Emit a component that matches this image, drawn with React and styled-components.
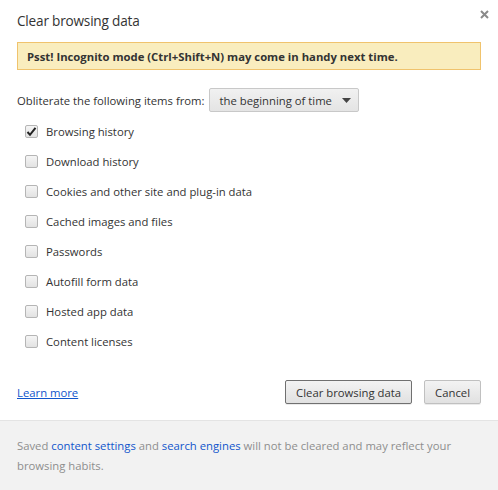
import React from 'react';
import styled, { createGlobalStyle } from 'styled-components';

const GlobalStyle = createGlobalStyle`
  html, body {
    margin: 0;
    padding: 0;
    background: #fff;
  }
  body {
    font-family: "Open Sans", "Liberation Sans", sans-serif;
    font-size: 11.3px;
    color: #333;
  }
`;

const Dialog = styled.div`
  position: relative;
  width: 498px;
  height: 490px;
  display: flex;
  flex-direction: column;
  background: #fff;
`;

const Body = styled.div`
  flex: 1;
  padding: 10px 17px 0 17px;
`;

const Title = styled.h1`
  margin: 0;
  font-size: 13.6px;
  letter-spacing: -0.2px;
  font-weight: normal;
  line-height: 22px;
  color: #333;
`;

const CloseButton = styled.button`
  position: absolute;
  top: 6px;
  right: 6px;
  width: 16px;
  height: 16px;
  padding: 0;
  border: none;
  background: none;
  display: flex;
  align-items: center;
  justify-content: center;
`;

const Banner = styled.div`
  margin-top: 10px;
  height: 28px;
  box-sizing: border-box;
  background: #f9edbe;
  border: 1px solid #f0c36d;
  padding: 0 9px;
  display: flex;
  align-items: center;
  font-weight: bold;
  color: #333;
`;

const FromRow = styled.div`
  margin-top: 18px;
  display: flex;
  align-items: center;
  gap: 4px;
`;

const Select = styled.div`
  width: 150px;
  height: 24px;
  box-sizing: border-box;
  border: 1px solid #c8c8c8;
  border-radius: 2px;
  background: linear-gradient(#f1f1f1, #e4e4e4);
  display: flex;
  align-items: center;
  justify-content: space-between;
  padding: 0 7px 0 10px;
  color: #333;
`;

const List = styled.div`
  margin-top: 4px;
  padding-left: 8px;
  display: flex;
  flex-direction: column;
`;

const Row = styled.label`
  height: 30px;
  display: flex;
  align-items: center;
  gap: 8px;
`;

const Box = styled.span`
  width: 13px;
  height: 13px;
  box-sizing: border-box;
  border: 1px solid #b5b5b5;
  border-radius: 2px;
  background: linear-gradient(#f5f5f5, #e2e2e2);
  display: flex;
  align-items: center;
  justify-content: center;
`;

const Actions = styled.div`
  margin-top: 24px;
  display: flex;
  align-items: center;
`;

const Link = styled.a`
  color: #15c;
  text-decoration: underline;
  cursor: pointer;
`;

const Spacer = styled.div`
  flex: 1;
`;

const Button = styled.button`
  height: 24px;
  margin-left: 12px;
  padding: 0 ${p => (p.$focused ? '10px' : '10px')};
  font-family: inherit;
  font-size: 11.3px;
  color: #333;
  border-radius: 2px;
  border: 1px solid ${p => (p.$focused ? '#707070' : '#c0c0c0')};
  background: linear-gradient(#f3f3f3, #e1e1e1);
  box-shadow: 0 1px 0 rgba(0, 0, 0, 0.08);
`;

const Footer = styled.div`
  height: 70px;
  box-sizing: border-box;
  border-top: 1px solid #e4e4e4;
  background: #f2f2f2;
  padding: 15px 17px 0 17px;
  line-height: 20px;
  color: #8e8e8e;
`;

const FootLink = styled.a`
  color: #15c;
  text-decoration: none;
`;

const items = [
  { label: 'Browsing history', checked: true },
  { label: 'Download history' },
  { label: 'Cookies and other site and plug-in data' },
  { label: 'Cached images and files' },
  { label: 'Passwords' },
  { label: 'Autofill form data' },
  { label: 'Hosted app data' },
  { label: 'Content licenses' },
];

function Check({ checked }) {
  return (
    <Box>
      {checked && (
        <svg width="11" height="11" viewBox="0 0 11 11">
          <path d="M1.5 6 L4 8.8 L9.5 1.8" fill="none" stroke="#222" strokeWidth="2" />
        </svg>
      )}
    </Box>
  );
}

export default function App() {
  return (
    <>
      <GlobalStyle />
      <Dialog>
        <CloseButton aria-label="Close">
          <svg width="9" height="9" viewBox="0 0 9 9">
            <path d="M1 1 L8 8 M8 1 L1 8" stroke="#8a8a8a" strokeWidth="2" />
          </svg>
        </CloseButton>
        <Body>
          <Title>Clear browsing data</Title>
          <Banner>Psst! Incognito mode (Ctrl+Shift+N) may come in handy next time.</Banner>
          <FromRow>
            <span>Obliterate the following items from:</span>
            <Select>
              <span>the beginning of time</span>
              <svg width="9" height="5" viewBox="0 0 9 5">
                <path d="M0 0 H9 L4.5 5 Z" fill="#444" />
              </svg>
            </Select>
          </FromRow>
          <List>
            {items.map(item => (
              <Row key={item.label}>
                <Check checked={item.checked} />
                <span>{item.label}</span>
              </Row>
            ))}
          </List>
          <Actions>
            <Link>Learn more</Link>
            <Spacer />
            <Button $focused>Clear browsing data</Button>
            <Button>Cancel</Button>
          </Actions>
        </Body>
        <Footer>
          <span>Saved </span>
          <FootLink>content settings</FootLink>
          <span> and </span>
          <FootLink>search engines</FootLink>
          <span> will not be cleared and may reflect your browsing habits.</span>
        </Footer>
      </Dialog>
    </>
  );
}
